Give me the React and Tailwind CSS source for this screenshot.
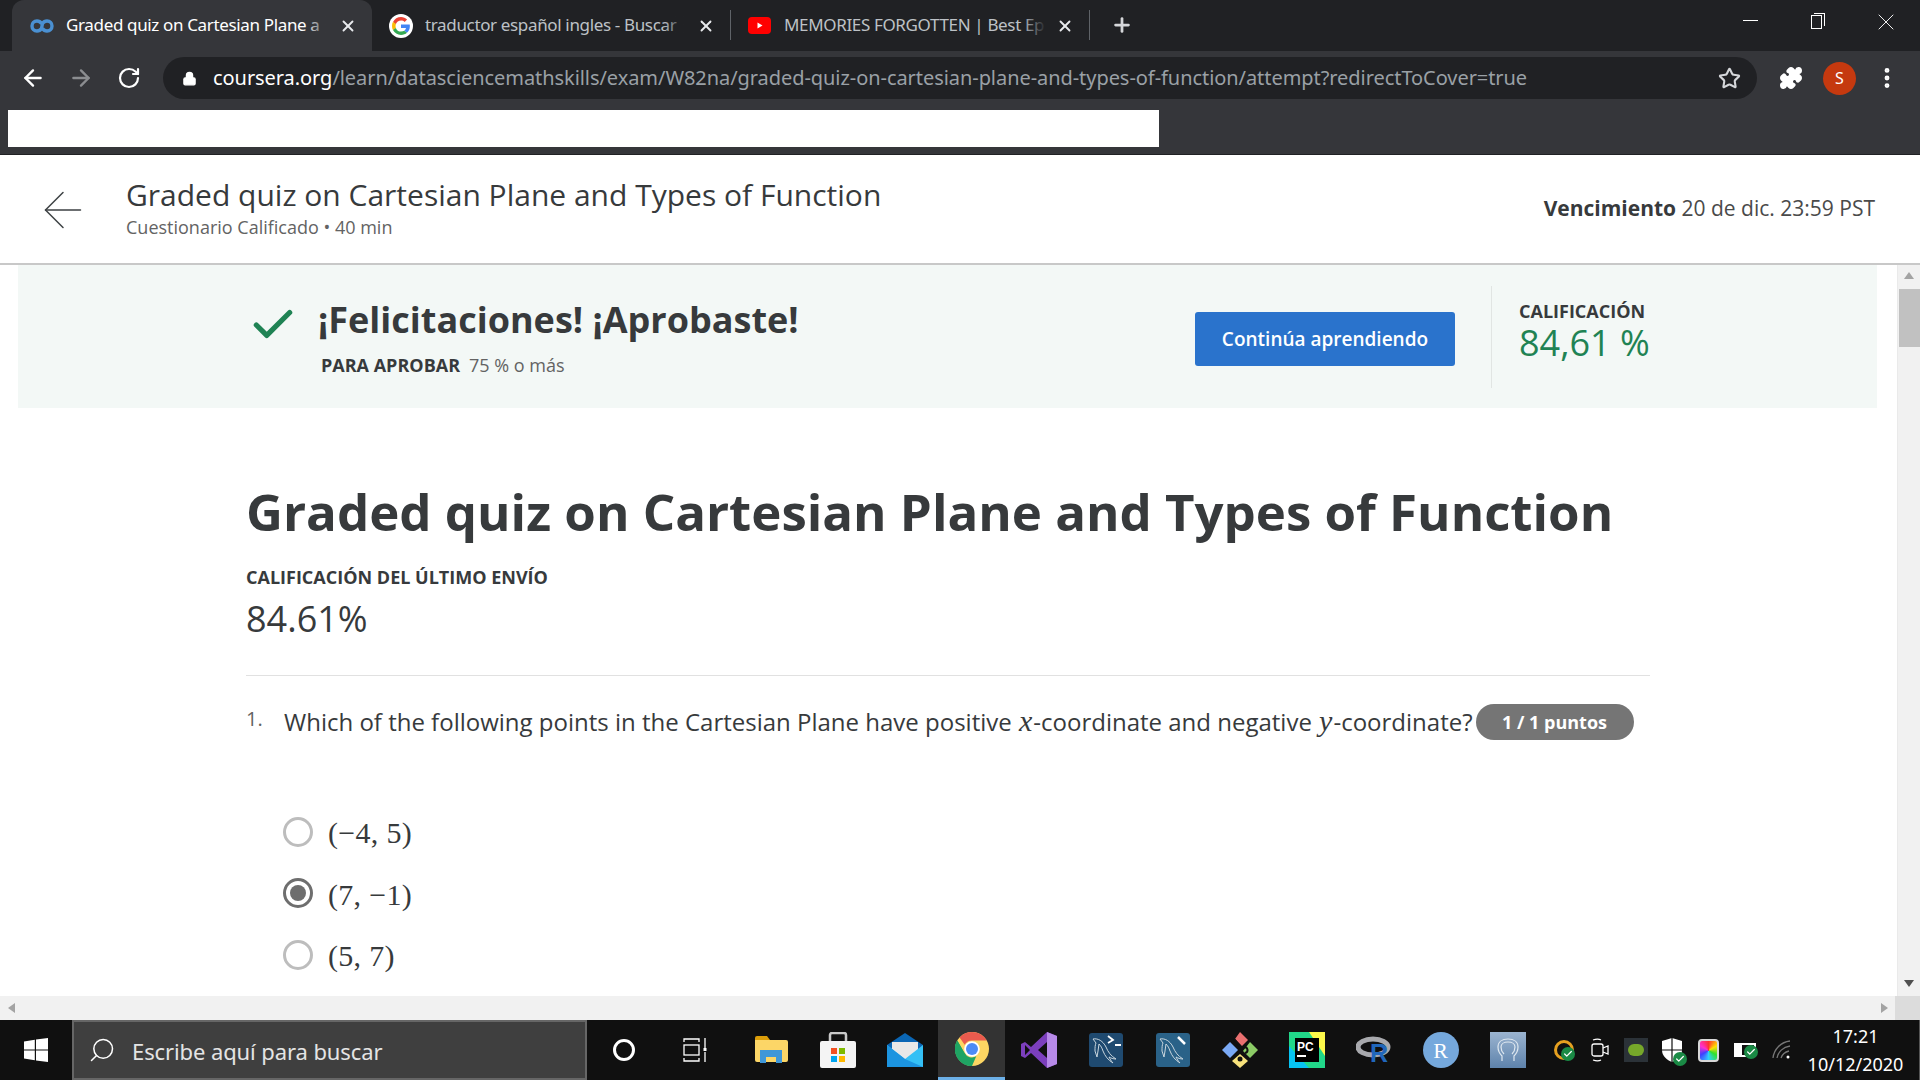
import { ArrowLeft, ArrowRight, RotateCw, Lock, Star, Puzzle, EllipsisVertical, Plus, X, Check, Search } from 'lucide-react'

const SANS = "font-['Open_Sans',sans-serif]"
const MATH = "font-['Liberation_Serif',serif]"

function CourseraIcon() {
  return (
    <svg width="24" height="14" viewBox="0 0 24 14" fill="none" stroke="#4a90d2" strokeWidth="3.4">
      <path d="M11.5 4.5C10.5 3 9 2 7 2 4 2 2 4.2 2 7s2 5 5 5c2 0 3.5-1 4.5-2.5l1-5C13.500 3 15 2 17 2c3 0 5 2.200 5 5s-2 5-5 5c-2 0-3.500-1-4.500-2.500" />
    </svg>
  )
}

function GoogleIcon() {
  return (
    <svg width="24" height="24" viewBox="0 0 48 48">
      <circle cx="24" cy="24" r="24" fill="#fff" />
      <path fill="#ea4335" d="M24 13c3 0 5.400 1 7.300 2.800l4.900-4.900C33 8 28.900 6 24 6 17 6 11 10 8 15.900l5.700 4.400C15.100 16 19.200 13 24 13z" />
      <path fill="#4285f4" d="M41.700 24.400c0-1.300-.1-2.300-.3-3.400H24v7h10c-.4 2.200-1.700 4.100-3.600 5.400l5.500 4.300c3.600-3.300 5.800-8 5.800-13.300z" />
      <path fill="#fbbc05" d="M13.700 28.100c-.4-1.200-.6-2.700-.6-4.100s.2-2.900.6-4.100L8 15.500C6.700 18 6 21 6 24s.7 6 2 8.500l5.700-4.400z" />
      <path fill="#34a853" d="M24 42c4.900 0 9-1.600 11.900-4.300l-5.500-4.300c-1.600 1-3.600 1.700-6.400 1.700-4.800 0-8.900-3-10.300-7.300L8 32.200C11 38 17 42 24 42z" />
    </svg>
  )
}

function YoutubeIcon() {
  return (
    <svg width="23" height="17" viewBox="0 0 23 17">
      <rect width="23" height="17" rx="4" fill="#f00" />
      <path d="M9.500 5.500v6l5-3z" fill="#fff" />
    </svg>
  )
}

function ChromeIcon() {
  return (
    <svg width="34" height="34" viewBox="0 0 48 48">
      <circle cx="24" cy="24" r="24" fill="#fdd663" />
      <path d="M24 0a24 24 0 0 1 20.800 12H24a12 12 0 0 0-10.400 6L6.500 7.600A24 24 0 0 1 24 0z" fill="#ea5b4e" />
      <path d="M3.200 12 13.600 30 24 48A24 24 0 0 1 3.200 12z" fill="#1fa463" />
      <path d="M13.600 30a12 12 0 0 0 16.400 4.400L24 48h-3A24 24 0 0 1 3.200 12z" fill="#1fa463" />
      <circle cx="24" cy="24" r="11" fill="#fff" />
      <circle cx="24" cy="24" r="8.500" fill="#4d8bf5" />
    </svg>
  )
}

function WindowsIcon() {
  return (
    <svg width="24" height="24" viewBox="0 0 24 24" fill="#fff">
      <path d="M0 3.400 10.800 1.700v9.700H0zM12 1.500 24 0v11.400H12zM0 12.600h10.800v9.700L0 20.600zM12 12.600h12V24l-12-1.600z" />
    </svg>
  )
}

function TaskViewIcon() {
  return (
    <svg width="26" height="24" viewBox="0 0 26 24" fill="none" stroke="#fff" strokeWidth="1.300">
      <path d="M1 4V1h15v3M1 20v3h15v-3" />
      <rect x="1" y="7" width="15" height="10" />
      <path d="M22 0v10M22 14v10" />
      <rect x="20.500" y="10" width="3" height="3" fill="#fff" stroke="none" />
    </svg>
  )
}

function FolderIcon() {
  return (
    <svg width="34" height="30" viewBox="0 0 34 30">
      <path d="M1 3a2 2 0 0 1 2-2h10l3 4H1z" fill="#dc9e0a" />
      <path d="M1 5h31a2 2 0 0 1 2 2v18a2 2 0 0 1-2 2H3a2 2 0 0 1-2-2z" fill="#fcd667" />
      <path d="M6 28V15h22v13h-6v-6H12v6z" fill="#3f97d8" />
    </svg>
  )
}

function StoreIcon() {
  return (
    <svg width="36" height="36" viewBox="0 0 36 36">
      <path d="M10 10V3a2 2 0 0 1 2-2h12a2 2 0 0 1 2 2v7" fill="none" stroke="#c9c9c9" strokeWidth="2.500" />
      <rect x="0" y="9" width="36" height="27" rx="2" fill="#f4f4f4" />
      <rect x="11" y="16" width="6" height="6" fill="#f25022" />
      <rect x="19" y="16" width="6" height="6" fill="#7fba00" />
      <rect x="11" y="24" width="6" height="6" fill="#00a4ef" />
      <rect x="19" y="24" width="6" height="6" fill="#ffb900" />
    </svg>
  )
}

function MailIcon() {
  return (
    <svg width="36" height="34" viewBox="0 0 36 34">
      <path d="M0 12 18 0l18 12v4H0z" fill="#0a66b5" />
      <path d="M5 9h26v12l-13 7-13-7z" fill="#e8e8e8" />
      <path d="M0 12l18 14 18-14v22H0z" fill="#35c0f5" />
      <path d="M0 34V12l18 14 18 8z" fill="#1c94e0" />
    </svg>
  )
}

function VisualStudioIcon() {
  return (
    <svg width="36" height="36" viewBox="0 0 36 36">
      <path d="M26 0l10 4v28l-10 4-16-15-6 5-4-2V12l4-2 6 5z" fill="#7c3fbd" />
      <path d="M26 0l10 4v28l-10 4z" fill="#b78ae8" />
      <path d="M4 13v10l5-5zM26 10v16l-9-8z" fill="#101010" />
    </svg>
  )
}

function MysqlIcon({ variant }) {
  const bg = variant === 'wrench' ? '#2a6288' : '#1f4a70'
  return (
    <svg width="34" height="34" viewBox="0 0 34 34">
      <rect width="34" height="34" rx="3" fill={bg} />
      <path d="M4 6c5-1 10 2 13 8 2 5 5 9 10 12-3 0-5-1-7-2 1 2 2 4 4 6-5-3-8-7-10-12-1-3-2-5-4-7l-1 7-1 6-2-6c0-3 0-6 1-8z" fill="none" stroke="#c9d6de" strokeWidth="1" />
      {variant === 'wrench'
        ? <path d="M22 4l7 7" stroke="#fff" strokeWidth="2.500" />
        : <path d="M19 3l5 4-5 3M26 12h6" stroke="#fff" strokeWidth="1.800" fill="none" />}
    </svg>
  )
}

function KrakenIcon() {
  return (
    <svg width="36" height="36" viewBox="0 0 36 36">
      <path d="M18 0l8 8-6 6-7-7z" fill="#ea7070" />
      <path d="M8 10l8 8-8 8-8-8z" fill="#7aa9f5" />
      <path d="M28 10l8 8-8 8-7-7z" fill="#8ccc66" />
      <path d="M18 22l8 7-8 7-8-7z" fill="#f8e27c" />
      <circle cx="18" cy="27" r="2.500" fill="#111" />
      <path d="M12 7l6 7M22 15c4 0 5 5 1 6" stroke="#111" strokeWidth="2" fill="none" />
    </svg>
  )
}

function PycharmIcon() {
  return (
    <svg width="36" height="36" viewBox="0 0 36 36">
      <rect width="36" height="36" fill="#21d789" />
      <path d="M20 0h16v24z" fill="#fcf84a" />
      <path d="M0 14 0 36h20z" fill="#07c3f2" />
      <rect x="6" y="6" width="24" height="24" fill="#000" />
      <text x="8" y="19" fontSize="12" fontWeight="700" fill="#fff" fontFamily="Liberation Sans">PC</text>
      <rect x="8" y="23" width="9" height="2" fill="#fff" />
    </svg>
  )
}

function RLangIcon() {
  return (
    <svg width="36" height="36" viewBox="0 0 36 36">
      <ellipse cx="17" cy="15" rx="15" ry="8" fill="none" stroke="#a8a9ad" strokeWidth="5" />
      <text x="14" y="30" fontSize="25" fontWeight="700" fill="#2167bb" fontFamily="Liberation Sans">R</text>
    </svg>
  )
}

function HeadIcon() {
  return (
    <svg width="36" height="36" viewBox="0 0 36 36">
      <defs>
        <linearGradient id="headBg" x1="0" y1="0" x2="0" y2="1">
          <stop offset="0" stopColor="#9bb4d0" />
          <stop offset="1" stopColor="#5e83ac" />
        </linearGradient>
      </defs>
      <rect width="36" height="36" fill="url(#headBg)" />
      <path d="M12 29v-5c-3-3-4-6-4-9 0-5 4-8 10-8s10 3 10 8c0 3-1 6-4 9v5" fill="none" stroke="#dfe8f0" strokeWidth="1.200" />
      <path d="M14 22c-2-2-3-4-3-7 0-3 3-5 7-5s7 2 7 5c0 3-1 5-3 7" fill="none" stroke="#dfe8f0" strokeWidth="1.200" />
    </svg>
  )
}

function GreenBadge({ size = 14 }) {
  return (
    <span className="absolute -bottom-1 -right-1 flex items-center justify-center rounded-full bg-[#1a8a45]" style={{ width: size, height: size }}>
      <Check className="w-2.5 h-2.5 text-white" strokeWidth={3} />
    </span>
  )
}

function TrayIcons() {
  return (
    <div className="flex items-center">
      <div className="w-9 flex justify-center">
        <div className="relative w-5 h-5 rounded-full border-[3px] border-[#e6a020]">
          <GreenBadge />
        </div>
      </div>
      <div className="w-9 flex justify-center">
        <svg width="18" height="24" viewBox="0 0 18 24" fill="none" stroke="#fff" strokeWidth="1.300">
          <rect x="1" y="6" width="11" height="12" rx="2" />
          <path d="M12 10l5-2v8l-5-2M2 2c3-1 6-1 8 0M2 22c3 1 6 1 8 0" />
        </svg>
      </div>
      <div className="w-9 flex justify-center">
        <div className="w-6 h-6 bg-[#2b3238] flex items-center justify-center">
          <div className="w-4 h-3 rounded-full bg-[#76a82a]" />
        </div>
      </div>
      <div className="w-9 flex justify-center">
        <div className="relative">
          <svg width="22" height="24" viewBox="0 0 22 24">
            <path d="M11 0l10 3v9c0 6-5 10-10 12C6 22 1 18 1 12V3z" fill="#fff" />
            <path d="M11 0v24M1 12h20" stroke="#101010" strokeWidth="1.200" />
          </svg>
          <GreenBadge />
        </div>
      </div>
      <div className="w-9 flex justify-center">
        <div className="w-[21px] h-[23px] rounded-[4px] border-2 border-[#d8d8d8] bg-[conic-gradient(#ff3030,#ffe000,#30e030,#30d0ff,#4040ff,#ff30d0,#ff3030)]" />
      </div>
      <div className="w-[38px] flex justify-center">
        <div className="relative w-[22px] h-3.5 border-2 border-white flex">
          <div className="w-1.5 h-full bg-white" />
          <GreenBadge />
        </div>
      </div>
      <div className="w-9 flex justify-center">
        <svg width="20" height="20" viewBox="0 0 20 20" fill="none" stroke="#777" strokeWidth="1.300">
          <path d="M1 18C2 9 9 2 18 1M5 18c1-6 6-11 13-12M9 18c1-3 4-6 8-7" />
          <circle cx="16" cy="17" r="1.500" fill="#fff" stroke="none" />
        </svg>
      </div>
    </div>
  )
}

function Tab({ icon, title, active, width }) {
  return (
    <div className={`relative flex items-center h-[51px] ${width} ${active ? 'pl-[18px] bg-[#35363a] rounded-t-xl text-white' : 'pl-[17px] text-[#bdc1c6]'}`}>
      <div className="w-[36px] shrink-0">{icon}</div>
      <div className="relative flex-1 -mt-[2px] overflow-hidden whitespace-nowrap text-[17px] tracking-[-0.35px]">
        {title}
        <div className={`absolute inset-y-0 right-0 w-6 bg-gradient-to-r from-transparent ${active ? 'to-[#35363a]' : 'to-[#202124]'}`} />
      </div>
      <X className="w-[18px] h-[18px] ml-[10px] mr-[15px] shrink-0 text-[#e8eaed]" strokeWidth={2.500} />
    </div>
  )
}

function BrowserChrome() {
  return (
    <div className={`font-['Noto_Sans',sans-serif] shrink-0`}>
      <div className="flex h-[51px] bg-[#202124] pl-3">
        <Tab active icon={<CourseraIcon />} title="Graded quiz on Cartesian Plane a" width="w-[360px]" />
        <Tab icon={<GoogleIcon />} title="traductor español ingles - Buscar" width="w-[358px]" />
        <div className="w-px h-[30px] mt-[10px] bg-[#5f6368]" />
        <Tab icon={<YoutubeIcon />} title="MEMORIES FORGOTTEN | Best Ep" width="w-[358px]" />
        <div className="w-px h-[30px] mt-[10px] bg-[#5f6368]" />
        <Plus className="w-[22px] h-[22px] ml-[21px] mt-[14px] text-[#d5d7da]" strokeWidth={3} />
        <div className="flex-1" />
        <div className="flex items-start text-white">
          <div className="w-[68px] flex justify-center pt-[20px]"><div className="w-[15px] h-px bg-white" /></div>
          <div className="w-[68px] pr-[3px] flex justify-center pt-[14px]">
            <div className="relative w-[11px] h-[14px] mt-[1px] border border-white">
              <div className="absolute -top-[3px] left-[2px] w-[11px] h-[13px] border-t border-r border-white" />
            </div>
          </div>
          <div className="w-[68px] flex justify-center pt-[8px]"><X className="w-7 h-7" strokeWidth={0.8} /></div>
        </div>
      </div>

      <div className="flex items-center h-[59px] pb-[5px] bg-[#35363a]">
        <ArrowLeft className="w-[26px] h-[26px] ml-[20px] text-white" strokeWidth={2.200} />
        <ArrowRight className="w-[26px] h-[26px] ml-[22px] text-[#8b8d90]" strokeWidth={2.200} />
        <RotateCw className="w-[24px] h-[24px] ml-[23px] text-white" strokeWidth={2.200} />
        <div className="flex items-center h-[42px] w-[1594px] ml-[22px] rounded-full bg-[#202124] pl-[19px] pr-[16px]">
          <Lock className="w-[15px] h-[15px] text-white" fill="white" />
          <div className="ml-[16px] flex-1 text-[20px] whitespace-nowrap tracking-[-0.06px] text-[#9aa0a6]">
            <span className="text-white">coursera.org</span>/learn/datasciencemathskills/exam/W82na/graded-quiz-on-cartesian-plane-and-types-of-function/attempt?redirectToCover=true
          </div>
          <Star className="w-[23px] h-[23px] text-[#d5d7da]" strokeWidth={2.200} />
        </div>
        <Puzzle className="w-[24px] h-[24px] ml-[22px] text-white" fill="white" />
        <div className="flex items-center justify-center w-[33px] h-[33px] ml-[20px] rounded-full bg-[#c5390f] text-white text-[16px]">S</div>
        <EllipsisVertical className="w-[26px] h-[26px] ml-[18px] text-white" strokeWidth={2.500} />
      </div>

      <div className="h-[44px] bg-[#35363a] pl-2">
        <div className="w-[1151px] h-[37px] bg-white" />
      </div>
      <div className="h-px bg-[#202124]" />
    </div>
  )
}

function Header() {
  return (
    <div className={`flex items-center h-[110px] shrink-0 bg-white border-b-2 border-[#c8c8c8] ${SANS}`}>
      <ArrowLeft className="w-[60px] h-[60px] ml-[33px] mt-[1px] text-[#3c4043]" strokeWidth={0.6} />
      <div className="ml-[33px] -mt-[3px] flex-1">
        <div className="text-[30px] leading-[36px] text-[#373a3c]">Graded quiz on Cartesian Plane and Types of Function</div>
        <div className="text-[18px] leading-[24px] mt-[2px] text-[#636363]">Cuestionario Calificado • 40 min</div>
      </div>
      <div className="pr-[45px] text-[21px] text-[#4a4a4a]"><span className="font-bold text-[#373a3c]">Vencimiento</span> 20 de dic. 23:59 PST</div>
    </div>
  )
}

function Banner() {
  return (
    <div className="flex items-center shrink-0 w-[1859px] h-[143px] ml-[18px] bg-[#f3f8f6]">
      <Check className="w-[50px] h-[50px] ml-[230px] -mt-[23px] text-[#1f8354]" strokeWidth={2.500} />
      <div className="ml-[20px] flex-1">
        <div className="text-[36px] leading-[48px] font-bold text-[#373a3c]">¡Felicitaciones! ¡Aprobaste!</div>
        <div className="mt-[9px] ml-[3px] text-[18px] leading-[24px] text-[#636363]"><span className="font-bold text-[#373a3c]">PARA APROBAR</span><span className="ml-[9px]">75 % o más</span></div>
      </div>
      <div className="flex items-center justify-center w-[260px] h-[54px] mt-[5px] rounded-[3px] bg-[#2a73cc] text-white text-[19px] font-semibold">Continúa aprendiendo</div>
      <div className="w-px h-[102px] ml-[36px] bg-[#e1e5e3]" />
      <div className="ml-[27px] -mt-[10px] w-[358px]">
        <div className="text-[18px] leading-[22px] font-bold text-[#373a3c]">CALIFICACIÓN</div>
        <div className="text-[36px] leading-[42px] text-[#1f8354]">84,61 %</div>
      </div>
    </div>
  )
}

function Option({ label, selected }) {
  return (
    <div className="flex items-center h-[61.500px]">
      <div className={`flex items-center justify-center w-[30px] h-[30px] rounded-full border-[3px] ${selected ? 'border-[#6e6e6e]' : 'border-[#bdbdbd]'}`}>
        {selected && <div className="w-[16px] h-[16px] rounded-full bg-[#6e6e6e]" />}
      </div>
      <div className={`ml-[15px] mt-[2px] text-[30px] tracking-[0.3px] text-[#373a3c] ${MATH}`}>{label}</div>
    </div>
  )
}

function QuizBody() {
  return (
    <div className="flex-1 flex flex-col min-w-0 overflow-hidden bg-white">
      <Banner />
      <div className="pl-[246px] w-[1650px]">
        <h1 className="mt-[72px] text-[51px] leading-[62px] font-bold whitespace-nowrap text-[#373a3c]">Graded quiz on Cartesian Plane and Types of Function</h1>
        <div className="mt-[23px] text-[18px] leading-[24px] font-bold text-[#373a3c]">CALIFICACIÓN DEL ÚLTIMO ENVÍO</div>
        <div className="mt-[6px] text-[36px] leading-[48px] text-[#373a3c]">84.61%</div>
        <div className="mt-[32px] h-px bg-[#e1e1e1]" />
        <div className="flex items-center mt-[28px] h-[36px] whitespace-nowrap">
          <span className="w-[38px] -mt-[6px] text-[20px] text-[#636363]">1.</span>
          <span className="-mt-[3px] text-[24px] text-[#373a3c]">
            Which of the following points in the Cartesian Plane have positive <i className={`${MATH} text-[30px] px-[1px]`}>x</i>-coordinate and negative <i className={`${MATH} text-[30px] px-[1px]`}>y</i>-coordinate?
          </span>
          <span className="flex items-center justify-center w-[158px] h-[36px] ml-[3px] rounded-full bg-[#757575] text-white text-[18px] font-bold">1 / 1 puntos</span>
        </div>
        <div className="mt-[61px] ml-[37px]">
          <Option label="(−4, 5)" />
          <Option label="(7, −1)" selected />
          <Option label="(5, 7)" />
        </div>
      </div>
    </div>
  )
}

function Scrollbars() {
  return (
    <div className="relative w-[23px] shrink-0 bg-[#f1f1f1] border-l border-[#eaeaea]">
      <div className="mx-auto mt-[7px] w-0 h-0 border-x-[5px] border-x-transparent border-b-[7px] border-b-[#a3a3a3]" />
      <div className="mx-auto mt-[10px] w-[21px] h-[58px] bg-[#c1c1c1]" />
      <div className="absolute bottom-[9px] left-[6px] w-0 h-0 border-x-[5px] border-x-transparent border-t-[7px] border-t-[#505050]" />
    </div>
  )
}

function Taskbar() {
  const apps = [
    <FolderIcon key="folder" />,
    <StoreIcon key="store" />,
    <MailIcon key="mail" />,
    <ChromeIcon key="chrome" />,
    <VisualStudioIcon key="vs" />,
    <MysqlIcon key="mysql1" />,
    <MysqlIcon key="mysql2" variant="wrench" />,
    <KrakenIcon key="kraken" />,
    <PycharmIcon key="pycharm" />,
    <RLangIcon key="r" />,
    <div key="rstudio" className={`flex items-center justify-center w-9 h-9 rounded-full bg-[#75a8dc] text-white text-[22px] ${MATH}`}>R</div>,
    <HeadIcon key="head" />,
  ]
  return (
    <div className="flex items-center h-[60px] shrink-0 bg-[#101010] font-['Noto_Sans',sans-serif]">
      <div className="flex items-center justify-center w-[72px] h-full"><WindowsIcon /></div>
      <div className="flex items-center w-[515px] h-full bg-[#3f3f3f] border-2 border-[#666]">
        <Search className="w-[28px] h-[28px] ml-[14px] -scale-x-100 text-white" strokeWidth={1.300} />
        <span className="ml-[16px] mt-[3px] text-[22px] tracking-[-0.1px] text-[#e4e4e4]">Escribe aquí para buscar</span>
      </div>
      <div className="flex items-center justify-center w-[73px]">
        <div className="w-[22px] h-[22px] rounded-full border-[3px] border-white" />
      </div>
      <div className="flex items-center justify-center w-[67px] ml-[2px] mr-[8px]"><TaskViewIcon /></div>
      {apps.map((app, i) => (
        <div key={i} className={`relative flex items-center justify-center w-[67px] h-full ${i === 3 ? 'bg-[#333] border-b-[3px] border-[#6cb0e8]' : ''}`}>{app}</div>
      ))}
      <div className="ml-[5px]"><TrayIcons /></div>
      <div className="w-[114px] pr-[3px] text-center text-white text-[18px] leading-[28px]">
        <div>17:21</div>
        <div>10/12/2020</div>
      </div>
      <div className="w-px h-full ml-[5px] bg-[#555]" />
    </div>
  )
}

export default function App() {
  return (
    <div className={`flex flex-col w-[1920px] h-[1080px] overflow-hidden bg-white ${SANS}`}>
      <BrowserChrome />
      <Header />
      <div className="flex flex-1 min-h-0">
        <QuizBody />
        <Scrollbars />
      </div>
      <div className="flex h-[24px] shrink-0 bg-[#f1f1f1]">
        <div className="mt-[7px] ml-[8px] w-0 h-0 border-y-[5px] border-y-transparent border-r-[7px] border-r-[#a3a3a3]" />
        <div className="flex-1" />
        <div className="mt-[7px] mr-[7px] w-0 h-0 border-y-[5px] border-y-transparent border-l-[7px] border-l-[#a3a3a3]" />
        <div className="w-[25px] bg-[#dcdcdc]" />
      </div>
      <Taskbar />
    </div>
  )
}
